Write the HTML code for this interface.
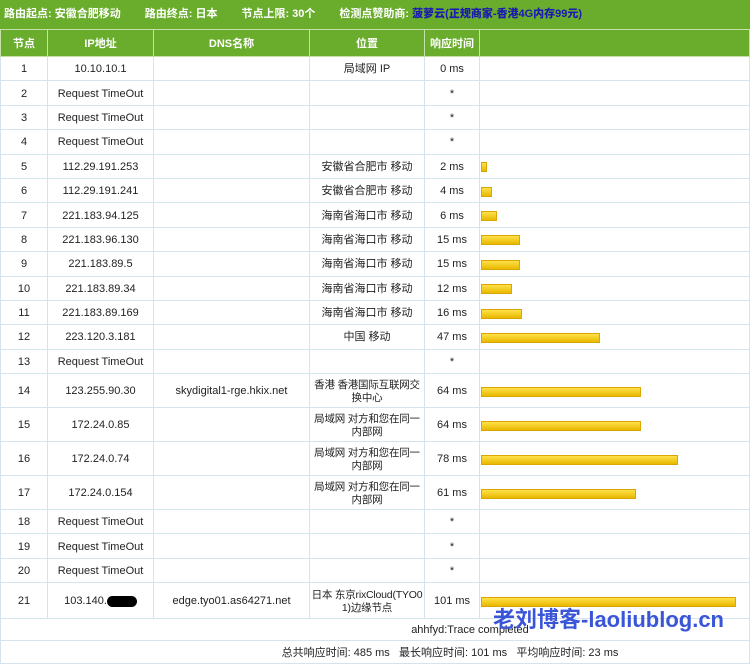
<!DOCTYPE html>
<html><head><meta charset="utf-8"><style>
body{margin:0;width:750px;height:663px;overflow:hidden;background:#fff;font-family:"Liberation Sans","Noto Sans CJK SC",sans-serif;font-size:11px;color:#222}
.top{height:29px;background:#6aad2c;color:#fff;font-weight:bold;font-size:11px;line-height:29px;padding-left:4px;white-space:nowrap}
.top span{margin-right:24px}
.top b{color:#1a1ab0}
table{border-collapse:collapse;width:750px;table-layout:fixed}
td,th{border:1px solid #d4e4ee;text-align:center;padding:0;font-size:11px;overflow:hidden;box-sizing:border-box}
th{background:#6aad2c;color:#fff;border-color:#c5e0a8;font-weight:bold}
td{line-height:13px;padding-top:2px}
tr{height:24.4px}
tr.h{height:27px}
tr.t{height:34px}
.loc{font-size:10.5px;word-break:break-all;letter-spacing:-0.2px}
.bar{height:8px;background:linear-gradient(#ffe14a,#e8b800);border:1px solid #d9a800;margin-left:1px}
</style></head><body>
<div class="top"><span>路由起点: 安徽合肥移动</span><span>路由终点: 日本</span><span>节点上限: 30个</span><span>检测点赞助商: <b>菠萝云(正规商家-香港4G内存99元)</b></span></div>
<table>
<colgroup><col style="width:47px"><col style="width:106px"><col style="width:156px"><col style="width:115px"><col style="width:55px"><col></colgroup>
<tr class="h"><th>节点</th><th>IP地址</th><th>DNS名称</th><th>位置</th><th>响应时间</th><th></th></tr>
<tr><td>1</td><td>10.10.10.1</td><td></td><td>局域网 IP</td><td>0 ms</td><td></td></tr>
<tr><td>2</td><td>Request TimeOut</td><td></td><td></td><td>*</td><td></td></tr>
<tr><td>3</td><td>Request TimeOut</td><td></td><td></td><td>*</td><td></td></tr>
<tr><td>4</td><td>Request TimeOut</td><td></td><td></td><td>*</td><td></td></tr>
<tr><td>5</td><td>112.29.191.253</td><td></td><td>安徽省合肥市 移动</td><td>2 ms</td><td><div class="bar" style="width:4px"></div></td></tr>
<tr><td>6</td><td>112.29.191.241</td><td></td><td>安徽省合肥市 移动</td><td>4 ms</td><td><div class="bar" style="width:9px"></div></td></tr>
<tr><td>7</td><td>221.183.94.125</td><td></td><td>海南省海口市 移动</td><td>6 ms</td><td><div class="bar" style="width:14px"></div></td></tr>
<tr><td>8</td><td>221.183.96.130</td><td></td><td>海南省海口市 移动</td><td>15 ms</td><td><div class="bar" style="width:37px"></div></td></tr>
<tr><td>9</td><td>221.183.89.5</td><td></td><td>海南省海口市 移动</td><td>15 ms</td><td><div class="bar" style="width:37px"></div></td></tr>
<tr><td>10</td><td>221.183.89.34</td><td></td><td>海南省海口市 移动</td><td>12 ms</td><td><div class="bar" style="width:29px"></div></td></tr>
<tr><td>11</td><td>221.183.89.169</td><td></td><td>海南省海口市 移动</td><td>16 ms</td><td><div class="bar" style="width:39px"></div></td></tr>
<tr><td>12</td><td>223.120.3.181</td><td></td><td>中国 移动</td><td>47 ms</td><td><div class="bar" style="width:117px"></div></td></tr>
<tr><td>13</td><td>Request TimeOut</td><td></td><td></td><td>*</td><td></td></tr>
<tr class="t"><td>14</td><td>123.255.90.30</td><td>skydigital1-rge.hkix.net</td><td class="loc">香港 香港国际互联网交换中心</td><td>64 ms</td><td><div class="bar" style="width:158px"></div></td></tr>
<tr class="t"><td>15</td><td>172.24.0.85</td><td></td><td class="loc">局域网 对方和您在同一内部网</td><td>64 ms</td><td><div class="bar" style="width:158px"></div></td></tr>
<tr class="t"><td>16</td><td>172.24.0.74</td><td></td><td class="loc">局域网 对方和您在同一内部网</td><td>78 ms</td><td><div class="bar" style="width:195px"></div></td></tr>
<tr class="t"><td>17</td><td>172.24.0.154</td><td></td><td class="loc">局域网 对方和您在同一内部网</td><td>61 ms</td><td><div class="bar" style="width:153px"></div></td></tr>
<tr><td>18</td><td>Request TimeOut</td><td></td><td></td><td>*</td><td></td></tr>
<tr><td>19</td><td>Request TimeOut</td><td></td><td></td><td>*</td><td></td></tr>
<tr><td>20</td><td>Request TimeOut</td><td></td><td></td><td>*</td><td></td></tr>
<tr class="t" style="height:36px"><td>21</td><td>103.140.<span style="display:inline-block;width:30px;height:11px;background:#000;border-radius:6px;vertical-align:middle"></span></td><td>edge.tyo01.as64271.net</td><td class="loc">日本 东京rixCloud(TYO01)边缘节点</td><td>101 ms</td><td><div class="bar" style="width:253px"></div></td></tr>
<tr style="height:22px"><td colspan="6" style="position:relative;overflow:visible;padding-left:190px">ahhfyd:Trace completed<span style="position:absolute;left:492px;top:-6px;font-size:22px;font-weight:bold;color:#3a55d8;white-space:nowrap">老刘博客-laoliublog.cn</span></td></tr>
<tr style="height:23px"><td colspan="6" style="padding-left:150px">总共响应时间: 485 ms &nbsp; 最长响应时间: 101 ms &nbsp; 平均响应时间: 23 ms</td></tr>
</table>
</body></html>
